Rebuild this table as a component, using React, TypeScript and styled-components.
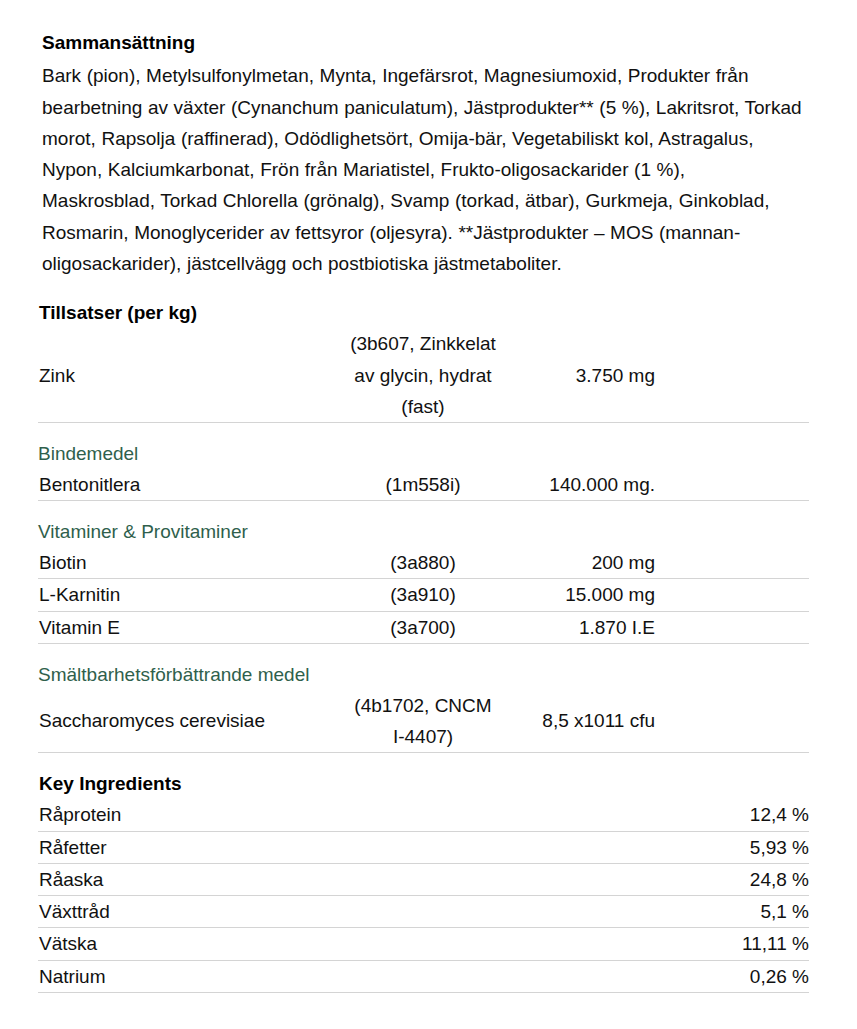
import React from "react";
import styled, { createGlobalStyle } from "styled-components";

const Global = createGlobalStyle`
  html, body { margin: 0; padding: 0; background: #fff; }
  body { font-family: "Liberation Sans", Arial, sans-serif; color: #111; }
`;

const Page = styled.div`
  width: 771px;
  padding: 27px 0 30px 38px;
  font-size: 19px;
  line-height: 31.3px;
`;

const Heading = styled.h3<{ $indent?: boolean; $top?: number }>`
  margin: ${(p) => p.$top ?? 0}px 0 ${(p) => (p.$indent ? 2 : 0)}px ${(p) => (p.$indent ? 4 : 1)}px;
  font-size: 19px;
  font-weight: 700;
  line-height: 31.3px;
  color: #000;
`;

const Paragraph = styled.p`
  margin: 0 0 17.7px 4px;
  width: 767px;
  white-space: pre-line;
  word-spacing: 0.3px;
`;

const Group = styled.div`
  padding-top: 14.5px;
  color: #2f5f4c;
`;

const Row = styled.div`
  display: grid;
  grid-template-columns: 310px 150px 157px 1fr;
  align-items: center;
  border-bottom: 1px solid #d4d4d4;
`;

const Name = styled.div`
  padding-left: 1px;
`;

const Code = styled.div`
  text-align: center;
`;

const Value = styled.div`
  text-align: right;
`;

const KeyRow = styled.div`
  display: flex;
  justify-content: space-between;
  border-bottom: 1px solid #d4d4d4;
  padding-left: 1px;
`;

type Item = { name: string; code: string; value: string };
type Block = { group?: string; items: Item[] };

const composition = [
  "Bark (pion), Metylsulfonylmetan, Mynta, Ingefärsrot, Magnesiumoxid, Produkter från",
  "bearbetning av växter (Cynanchum paniculatum), Jästprodukter** (5 %), Lakritsrot, Torkad",
  "morot, Rapsolja (raffinerad), Odödlighetsört, Omija-bär, Vegetabiliskt kol, Astragalus,",
  "Nypon, Kalciumkarbonat, Frön från Mariatistel, Frukto-oligosackarider (1 %),",
  "Maskrosblad, Torkad Chlorella (grönalg), Svamp (torkad, ätbar), Gurkmeja, Ginkoblad,",
  "Rosmarin, Monoglycerider av fettsyror (oljesyra). **Jästprodukter – MOS (mannan-",
  "oligosackarider), jästcellvägg och postbiotiska jästmetaboliter.",
].join("\n");

const additives: Block[] = [
  { items: [{ name: "Zink", code: "(3b607, Zinkkelat av glycin, hydrat (fast)", value: "3.750 mg" }] },
  { group: "Bindemedel", items: [{ name: "Bentonitlera", code: "(1m558i)", value: "140.000 mg." }] },
  {
    group: "Vitaminer & Provitaminer",
    items: [
      { name: "Biotin", code: "(3a880)", value: "200 mg" },
      { name: "L-Karnitin", code: "(3a910)", value: "15.000 mg" },
      { name: "Vitamin E", code: "(3a700)", value: "1.870 I.E" },
    ],
  },
  {
    group: "Smältbarhetsförbättrande medel",
    items: [{ name: "Saccharomyces cerevisiae", code: "(4b1702, CNCM I\u20114407)", value: "8,5 x1011 cfu" }],
  },
];

const keys: [string, string][] = [
  ["Råprotein", "12,4 %"],
  ["Råfetter", "5,93 %"],
  ["Råaska", "24,8 %"],
  ["Växttråd", "5,1 %"],
  ["Vätska", "11,11 %"],
  ["Natrium", "0,26 %"],
];

export default function App() {
  return (
    <>
      <Global />
      <Page>
        <Heading $indent>Sammansättning</Heading>
        <Paragraph>{composition}</Paragraph>
        <Heading>Tillsatser (per kg)</Heading>
        {additives.map((b, i) => (
          <React.Fragment key={i}>
            {b.group && <Group>{b.group}</Group>}
            {b.items.map((it) => (
              <Row key={it.name}>
                <Name>{it.name}</Name>
                <Code>{it.code}</Code>
                <Value>{it.value}</Value>
                <div />
              </Row>
            ))}
          </React.Fragment>
        ))}
        <Heading $top={14.5}>Key Ingredients</Heading>
        {keys.map(([n, v]) => (
          <KeyRow key={n}>
            <span>{n}</span>
            <span>{v}</span>
          </KeyRow>
        ))}
      </Page>
    </>
  );
}
